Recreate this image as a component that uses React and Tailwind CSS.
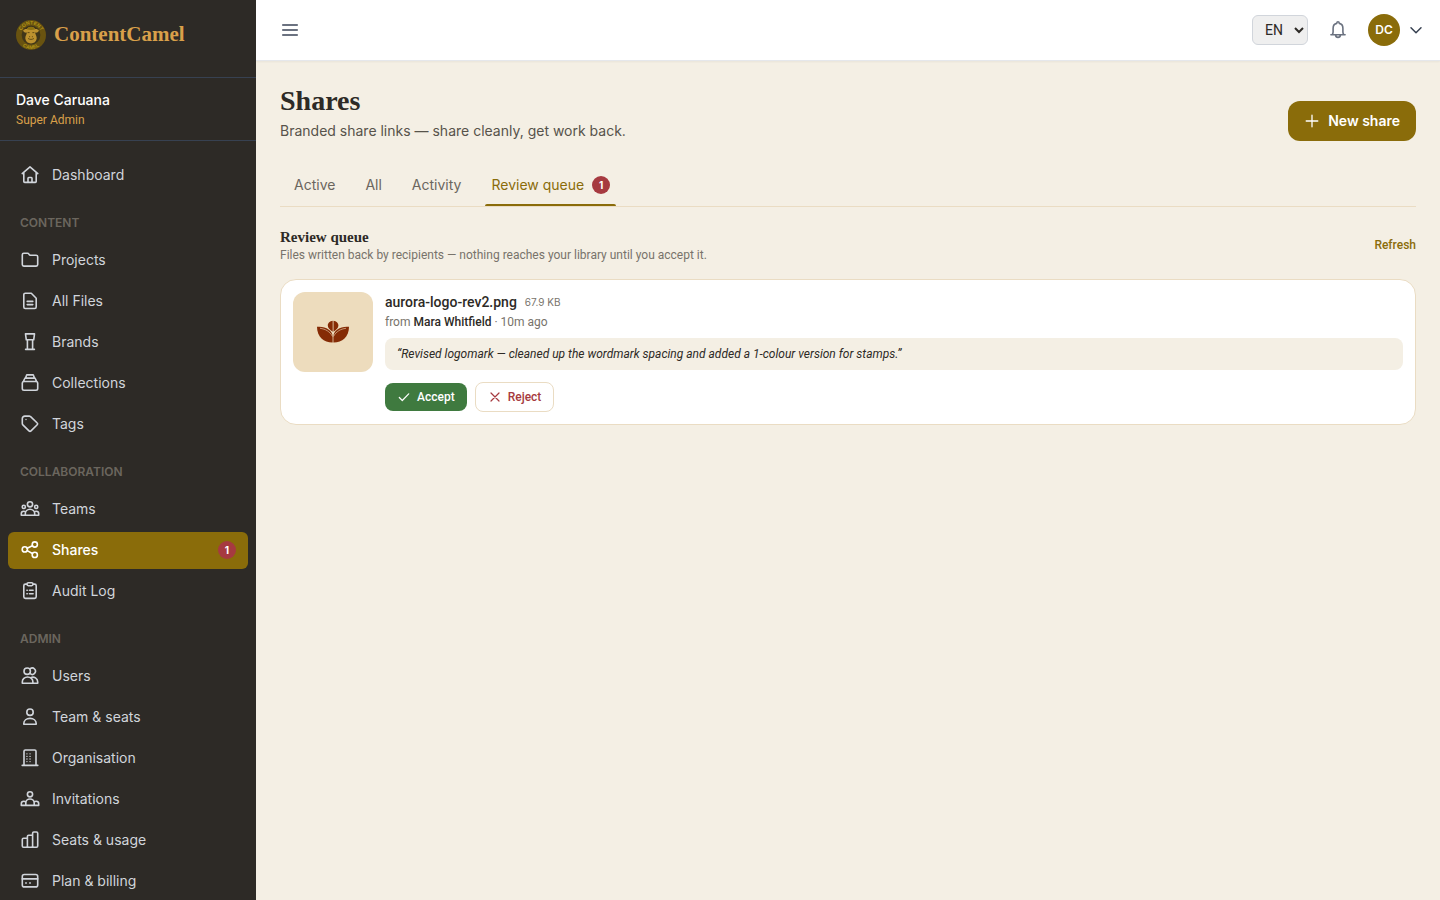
import React, { useState } from "react";
import clsx from "clsx";

const Icon = ({ children, className = "h-5 w-5", box = 20, stroke = 1.6 }) => (
  <svg
    viewBox={`0 0 ${box} ${box}`}
    className={clsx("shrink-0", className)}
    fill="none"
    stroke="currentColor"
    strokeWidth={stroke}
    strokeLinecap="round"
    strokeLinejoin="round"
    aria-hidden="true"
  >
    {children}
  </svg>
);

const ICONS = {
  home: <path d="M2.2 8.6 10 1.9l7.8 6.7M3.8 7.4v9.1c0 .5.4.9.9.9h10.6c.5 0 .9-.4.9-.9V7.4M8 17.2v-4c0-.4.3-.7.7-.7h2.6c.4 0 .7.3.7.7v4" />,
  folder: <path d="M2.3 4.8c0-.8.7-1.5 1.5-1.5h3.9c.4 0 .7.1.9.4l1 1.2c.2.2.5.4.8.4h5.8c.8 0 1.5.6 1.5 1.4v7.9c0 .8-.7 1.5-1.5 1.5H3.8c-.8 0-1.5-.7-1.5-1.5z" />,
  file: <path d="M5.3 2.2h6l4.9 5v8.9c0 .8-.6 1.4-1.4 1.4H5.2c-.8 0-1.4-.6-1.4-1.4V3.6c0-.8.7-1.4 1.5-1.4zM7.2 10.4h5.6M7.2 13.6h5.6" />,
  brand: <path d="M5.5 1.9h9l-.8 5.9H6.3zM7.4 7.8v9.6M12.6 7.8v9.6M5.6 17.4h8.8" />,
  stack: <path d="M4 8.5h12c1 0 1.7.7 1.7 1.6v5.5c0 1-.7 1.7-1.7 1.7H4c-1 0-1.7-.7-1.7-1.7v-5.5c0-.9.7-1.6 1.7-1.6zM3.5 8.4l1.1-2.7c.1-.4.4-.6.8-.6h9.2c.4 0 .7.2.8.6l1.1 2.7M5.6 5l.8-2.5c.1-.4.4-.6.8-.6h5.6c.4 0 .7.2.8.6l.8 2.5" />,
  tag: (
    <>
      <path d="M2.3 4.8c0-1.5 1.1-2.7 2.6-2.7h4.3c.6 0 1 .2 1.4.6l6.6 6.3c.6.5.6 1.2 0 1.7L11 16.9c-.6.6-1.4.6-2 0l-5.9-5.8c-.5-.5-.8-1-.8-1.7z" />
      <circle cx="6" cy="5.5" r=".7" fill="currentColor" stroke="none" />
    </>
  ),
  teams: (
    <>
      <circle cx="10" cy="5.3" r="2.6" />
      <circle cx="3.8" cy="7.9" r="1.6" />
      <circle cx="16.2" cy="7.9" r="1.6" />
      <path d="M5.3 16.3v-1.6a4.7 4.4 0 0 1 9.4 0v1.6zM5.3 16.3h-4v-1.8c0-1.4 1-2.3 2.4-2.3.8 0 1.5.2 2 .6M14.7 16.3h4v-1.8c0-1.4-1-2.3-2.4-2.3-.8 0-1.5.2-2 .6" />
    </>
  ),
  share: (
    <>
      <circle cx="4.8" cy="9.4" r="2.6" />
      <circle cx="14.8" cy="4.5" r="2.6" />
      <circle cx="14.8" cy="14.9" r="2.6" />
      <path d="m7.2 8.3 5.2-2.6M7.2 10.6l5.2 2.9" />
    </>
  ),
  audit: <path d="M7 3.1H5.4c-.9 0-1.6.7-1.6 1.6v11.1c0 .9.7 1.6 1.6 1.6h9.2c.9 0 1.6-.7 1.6-1.6V4.7c0-.9-.7-1.6-1.6-1.6H13M8.3 1.8h3.4c.8 0 1.3.6 1.3 1.3s-.5 1.6-1.3 1.6H8.3C7.5 4.7 7 3.8 7 3.1s.5-1.3 1.3-1.3zM6.9 9.2h.4M9.5 9.2h3.6M6.9 12.8h.4M9.5 12.8h3.6" />,
  users: (
    <>
      <circle cx="7.2" cy="5.2" r="3.2" />
      <path d="M2.3 17.2v-1.3a5.3 4.9 0 0 1 10.6 0v1.3zM10.2 2.7a3.2 3.2 0 1 1 0 5M10.7 11.7c3.5-1.6 7 .8 7 4.2v1.3h-4.8" />
    </>
  ),
  user: (
    <>
      <circle cx="10" cy="5.2" r="3.2" />
      <path d="M3.8 17.2v-.7c0-3 2.7-5.1 6.2-5.1s6.2 2.1 6.2 5.1v.7z" />
    </>
  ),
  building: (
    <>
      <path d="M4 17.4V3.3C4 2.500 4.500 2 5.300 2h9.400c.8 0 1.300.5 1.300 1.300v14.100M2.200 17.400h15.600" />
      <path d="M6.9 5.8h.1M6.9 8.4h.1M6.9 11h.1M6.9 13.6h.1M10 5.8h.1M10 8.4h.1M10 11h.1M10 13.6h.1" strokeWidth="1.3" />
    </>
  ),
  invite: (
    <>
      <circle cx="10" cy="5.3" r="2.6" />
      <path d="M5.8 16.4V14a4.2 4 0 0 1 8.4 0v2.4M1.3 16.4v-1.7c0-1.5 1-2.4 2.5-2.4.8 0 1.5.2 2 .6M18.7 16.4v-1.7c0-1.5-1-2.4-2.5-2.4-.8 0-1.5.2-2 .6M1.3 16.4h17.4" />
    </>
  ),
  bars: <path d="M7.4 8.3H3.5c-.7 0-1.2.5-1.2 1.2v6.6c0 .7.5 1.2 1.2 1.2h2.7c.7 0 1.2-.5 1.2-1.2V6.5c0-.7.5-1.2 1.2-1.2h4M12.6 16.1c0 .7-.5 1.2-1.2 1.2H8.6c-.7 0-1.2-.5-1.2-1.2M13.8 2h2.7c.7 0 1.2.5 1.2 1.2v12.9c0 .7-.5 1.2-1.2 1.2h-2.7c-.7 0-1.2-.5-1.2-1.2V3.2c0-.7.5-1.2 1.2-1.2z" />,
  card: (
    <>
      <rect x="2.3" y="3.5" width="15.4" height="12.4" rx="2" />
      <path d="M2.3 7.9h15.4M5.7 12h.6M9.7 12h.6" />
    </>
  )
};

const NAV = [
  { items: [{ label: "Dashboard", icon: "home" }] },
  {
    title: "Content",
    items: [
      { label: "Projects", icon: "folder" },
      { label: "All Files", icon: "file" },
      { label: "Brands", icon: "brand" },
      { label: "Collections", icon: "stack" },
      { label: "Tags", icon: "tag" }
    ]
  },
  {
    title: "Collaboration",
    items: [
      { label: "Teams", icon: "teams" },
      { label: "Shares", icon: "share", badge: 1, active: true },
      { label: "Audit Log", icon: "audit" }
    ]
  },
  {
    title: "Admin",
    items: [
      { label: "Users", icon: "users" },
      { label: "Team & seats", icon: "user" },
      { label: "Organisation", icon: "building" },
      { label: "Invitations", icon: "invite" },
      { label: "Seats & usage", icon: "bars" },
      { label: "Plan & billing", icon: "card" }
    ]
  }
];

const TABS = [
  { label: "Active" },
  { label: "All" },
  { label: "Activity" },
  { label: "Review queue", badge: 1 }
];

const Badge = ({ children }) => (
  <span className="flex h-[18px] w-[18px] items-center justify-center rounded-full bg-[#a63a40] text-[10px] font-bold leading-none text-white">
    {children}
  </span>
);

const Logo = () => (
  <svg viewBox="0 0 30 30" className="h-[30px] w-[30px] shrink-0" role="img" aria-label="Content Camel">
    <defs>
      <path id="ring-top" d="M4.5 15a10.5 10.5 0 0 1 21 0" />
      <path id="ring-bottom" d="M1 15a14 14 0 0 0 28 0" />
    </defs>
    <circle cx="15" cy="15" r="15" fill="#695310" />
    <circle cx="15" cy="15" r="9.4" fill="#403619" />
    <g fill="#b29416" fontFamily="Liberation Sans, sans-serif" fontWeight="700" fontSize="5" textAnchor="middle">
      <text>
        <textPath href="#ring-top" startOffset="50%">CONTENT</textPath>
      </text>
      <text>
        <textPath href="#ring-bottom" startOffset="50%">CAMEL</textPath>
      </text>
    </g>
    <path d="M7 10.8c.8-1.6 2.3-2 4-1.8.8-1.4 2.200-2 4-2s3.200.6 4 2c1.700-.2 3.200.2 4 1.800-1 1.700-2.400 2.100-3.800 1.800 0 2 1.700 3.600 1.500 6-.3 3.200-2.700 4.900-5.700 4.900s-5.400-1.700-5.700-4.900c-.2-2.400 1.500-4 1.500-6-1.400.3-2.800-.1-3.800-1.800z" fill="#bd922f" />
    <path d="M10.8 9.300c1-1.900 2.400-2.600 4.200-2.600s3.200.7 4.200 2.600c-2.500.9-5.900.9-8.400 0z" fill="#8d7210" />
    <path d="M12.4 18.700c1.600 1 3.600 1 5.200 0M13.500 16.700h.2M16.300 16.700h.2M12 12.600h1.200M16.800 12.600H18" stroke="#5a4512" strokeWidth=".9" fill="none" strokeLinecap="round" />
  </svg>
);

const Sidebar = () => (
  <aside className="sticky top-0 flex h-screen w-64 shrink-0 flex-col overflow-hidden bg-[#2d2a26]">
    <div className="flex h-[78px] shrink-0 items-start gap-2 border-b border-[#374151] px-4 pt-5">
      <Logo />
      <span className="font-['Liberation_Serif',serif] text-[21px] font-bold leading-7 text-[#d9a04a]">ContentCamel</span>
    </div>
    <div className="shrink-0 border-b border-[#374151] px-4 pb-3 pt-3">
      <p className="text-sm font-medium leading-5 text-white">Dave Caruana</p>
      <p className="mt-0.5 font-['Roboto',sans-serif] text-xs leading-4 text-[#d9a04a]">Super Admin</p>
    </div>
    <nav className="min-h-0 flex-1 overflow-y-auto px-2 pb-4 pt-4 [scrollbar-width:none]">
      {NAV.map((group) => (
        <div key={group.title || "main"}>
          {group.title && (
            <h2 className="px-3 pb-[9px] pt-[19px] text-xs font-semibold uppercase leading-5 text-[#6b665e]">
              {group.title}
            </h2>
          )}
          <ul className="space-y-1">
            {group.items.map((item) => (
              <li key={item.label}>
                <a
                  href="#"
                  className={clsx(
                    "flex h-[37px] items-center gap-3 rounded-md px-3 pb-px text-sm",
                    item.active ? "bg-[#8a6c0a] font-medium text-white" : "text-[#d1d5db]"
                  )}
                >
                  <Icon>{ICONS[item.icon]}</Icon>
                  <span className="flex-1">{item.label}</span>
                  {item.badge && <Badge>{item.badge}</Badge>}
                </a>
              </li>
            ))}
          </ul>
        </div>
      ))}
    </nav>
  </aside>
);

const Topbar = () => (
  <header className="flex h-[61px] items-center justify-between border-b border-[#e5e7eb] bg-white pl-6 pr-4 shadow-xs">
    <button type="button" aria-label="Toggle sidebar" className="text-[#6b7280]">
      <Icon stroke={1.8}>
        <path d="M2.2 5h15.6M2.2 10h15.6M2.2 15h15.6" strokeLinecap="butt" />
      </Icon>
    </button>
    <div className="flex items-center">
      <select
        aria-label="Language"
        defaultValue="EN"
        className="h-[30px] w-14 rounded-md border border-[#d1d5db] bg-[#efefef] pl-2 font-['Roboto',sans-serif] text-sm text-[#2d2a26]"
      >
        <option>EN</option>
        <option>DE</option>
        <option>FR</option>
      </select>
      <button type="button" aria-label="Notifications" className="ml-5 text-[#6b7280]">
        <Icon>
          <path d="M2.9 14.7h14.2M4.3 14.6c.5-.9.8-1.6.8-2.7V8.300c0-2.700 1.500-4.500 3.600-4.900.1-1 .6-1.600 1.300-1.600s1.200.6 1.300 1.600c2.100.4 3.600 2.200 3.600 4.900v3.600c0 1.100.3 1.800.8 2.700M7.500 14.900c.2 1.600 1.200 2.500 2.500 2.500s2.300-.9 2.500-2.500" />
        </Icon>
      </button>
      <button type="button" aria-label="Account menu" className="ml-5 flex items-center gap-2 text-[#374151]">
        <span className="flex h-8 w-8 items-center justify-center rounded-full bg-[#8a6c0a] text-xs font-semibold text-white">
          DC
        </span>
        <Icon className="h-4 w-4" box={16} stroke={1.5}>
          <path d="m3 5.800 5 5 5-5" />
        </Icon>
      </button>
    </div>
  </header>
);

const Thumbnail = () => (
  <div className="flex h-20 w-20 shrink-0 items-center justify-center rounded-xl bg-[#eddcbd]">
    <svg viewBox="0 0 34 24" className="h-6 w-[34px]" role="img" aria-label="aurora-logo-rev2.png preview">
      <g fill="#852b05">
        <path d="M16.7 11.800c-2.900-2-4.900-3.800-4.900-6.300C11.800 2.800 14 .9 16.700.7zM17.500 11.800c2.900-2 4.900-3.800 4.900-6.300 0-2.700-2.200-4.600-4.900-4.800z" />
        <path d="M1 6.800c8.300-.9 15.300 3.400 15.600 9.400v6.300C8 22.600 1 17 1 6.800z" />
        <path d="M33 6.800c-8.300-.9-15.300 3.400-15.600 9.400v6.300C26 22.600 33 17 33 6.800z" />
      </g>
      <path d="M4 8.300c5.500.7 9.700 3.100 12.600 8.200M30 8.300c-5.500.7-9.700 3.100-12.600 8.200" stroke="#eddcbd" strokeWidth=".6" fill="none" />
    </svg>
  </div>
);

const ReviewItem = () => (
  <article className="mt-4 flex gap-3 rounded-2xl border border-[#eadcc3] bg-white p-3">
    <Thumbnail />
    <div className="min-w-0 flex-1">
      <div className="flex items-center gap-2 leading-5">
        <h3 className="text-sm font-medium leading-5 text-[#2d2a26]">aurora-logo-rev2.png</h3>
        <span className="font-['Inter',sans-serif] text-[10px] text-[#78736b]">67.9 KB</span>
      </div>
      <p className="mt-0.5 text-xs text-[#78736b]">
        from <span className="font-medium text-[#2d2a26]">Mara Whitfield</span> · 10m ago
      </p>
      <p className="mt-2 rounded-lg bg-[#f4efe4] px-3 py-2 text-xs italic text-[#2d2a26]">
        “Revised logomark — cleaned up the wordmark spacing and added a 1-colour version for stamps.”
      </p>
      <div className="mt-3 flex items-center gap-2">
        <button
          type="button"
          className="flex h-7 items-center gap-1.5 rounded-lg bg-[#3f7a3f] px-3 text-xs font-medium text-white"
        >
          <Icon className="h-3.5 w-3.5" box={14} stroke={1.2}>
            <path d="m2.3 7.500 3 3 6.400-6.700" />
          </Icon>
          Accept
        </button>
        <button
          type="button"
          className="flex h-[30px] items-center gap-1.5 rounded-lg border border-[#eadcc3] bg-white px-3 text-xs font-medium text-[#a63a40]"
        >
          <Icon className="h-3.5 w-3.5" box={14} stroke={1.2}>
            <path d="m3 3 8 8M11 3l-8 8" />
          </Icon>
          Reject
        </button>
      </div>
    </div>
  </article>
);

export default function App() {
  const [tab, setTab] = useState("Review queue");

  return (
    <div className="flex min-h-screen bg-[#f4efe4] font-['Inter',sans-serif] text-[#2d2a26]">
      <Sidebar />
      <div className="min-w-0 flex-1">
        <Topbar />
        <main className="p-6">
          <div className="flex items-end justify-between gap-4">
            <div>
              <h1 className="font-['Liberation_Serif',serif] text-[28px] font-bold leading-8">Shares</h1>
              <p className="mt-1 text-sm leading-5 text-[#57534b]">Branded share links — share cleanly, get work back.</p>
            </div>
            <button
              type="button"
              className="flex h-10 items-center gap-2 rounded-xl bg-[#8a6c0a] px-4 text-sm font-semibold text-white"
            >
              <Icon className="h-4 w-4" box={16} stroke={1.3}>
                <path d="M8 2.200v11.600M2.200 8h11.600" />
              </Icon>
              New share
            </button>
          </div>

          <div role="tablist" className="mt-6 flex gap-0.5 border-b border-[#eadcc3]">
            {TABS.map(({ label, badge }) => (
              <button
                key={label}
                type="button"
                role="tab"
                aria-selected={tab === label}
                onClick={() => setTab(label)}
                className={clsx(
                  "relative flex h-[41px] items-center gap-2 px-3.5 pb-px text-sm",
                  tab === label ? "text-[#8a6c0a]" : "text-[#6b665e]"
                )}
              >
                {label}
                {badge && <Badge>{badge}</Badge>}
                {tab === label && <span className="absolute inset-x-2 bottom-0 h-0.5 rounded-t-full bg-[#8a6c0a]" />}
              </button>
            ))}
          </div>

          <section className="mt-5 font-['Roboto',sans-serif]">
            <div className="flex items-center justify-between">
              <div>
                <h2 className="font-['Liberation_Serif',serif] text-[15px] font-bold leading-5">Review queue</h2>
                <p className="text-xs leading-4 text-[#78736b]">
                  Files written back by recipients — nothing reaches your library until you accept it.
                </p>
              </div>
              <button type="button" className="text-xs font-medium text-[#8a6c0a]">
                Refresh
              </button>
            </div>
            <ReviewItem />
          </section>
        </main>
      </div>
    </div>
  );
}
